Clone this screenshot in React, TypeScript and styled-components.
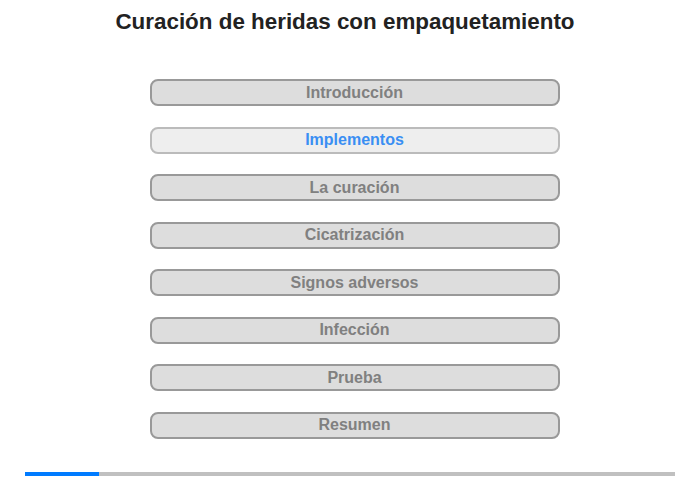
import React from "react";
import styled, { createGlobalStyle } from "styled-components";

const Global = createGlobalStyle`
  html, body { margin: 0; padding: 0; background: #fff; }
  body { font-family: "Liberation Sans", Arial, sans-serif; }
`;

const Page = styled.div`
  width: 700px;
  height: 480px;
  display: flex;
  flex-direction: column;
  align-items: center;
  box-sizing: border-box;
`;

const Title = styled.h1`
  margin: 10px 0 0 -10px;
  font-family: "Liberation Sans", Arial, sans-serif;
  font-size: 22.4px;
  font-weight: bold;
  color: #222;
  line-height: 24px;
`;

const Menu = styled.nav`
  margin-top: 45px;
  margin-left: 9px;
  display: flex;
  flex-direction: column;
  gap: 20.5px;
  width: 410px;
`;

const Item = styled.button<{ $active?: boolean }>`
  box-sizing: border-box;
  width: 100%;
  height: 27px;
  border-radius: 8px;
  border: 2px solid ${(p) => (p.$active ? "#bbb" : "#999")};
  background: ${(p) => (p.$active ? "#eee" : "#ddd")};
  color: ${(p) => (p.$active ? "#3a8ef3" : "#808080")};
  font-family: "Liberation Sans", Arial, sans-serif;
  font-weight: bold;
  font-size: 16px;
  padding: 0;
  display: flex;
  align-items: center;
  justify-content: center;
  cursor: pointer;
`;

const Progress = styled.div`
  margin-top: auto;
  margin-bottom: 4px;
  width: 650px;
  height: 4px;
  background: #c0c0c0;
  display: flex;
`;

const Fill = styled.div`
  height: 100%;
  background: #007bff;
`;

const items = [
  "Introducción",
  "Implementos",
  "La curación",
  "Cicatrización",
  "Signos adversos",
  "Infección",
  "Prueba",
  "Resumen",
];

export default function App() {
  return (
    <>
      <Global />
      <Page>
        <Title>Curación de heridas con empaquetamiento</Title>
        <Menu>
          {items.map((t, i) => (
            <Item key={t} $active={i === 1}>
              {t}
            </Item>
          ))}
        </Menu>
        <Progress>
          <Fill style={{ width: `${(74 / 650) * 100}%` }} />
        </Progress>
      </Page>
    </>
  );
}
